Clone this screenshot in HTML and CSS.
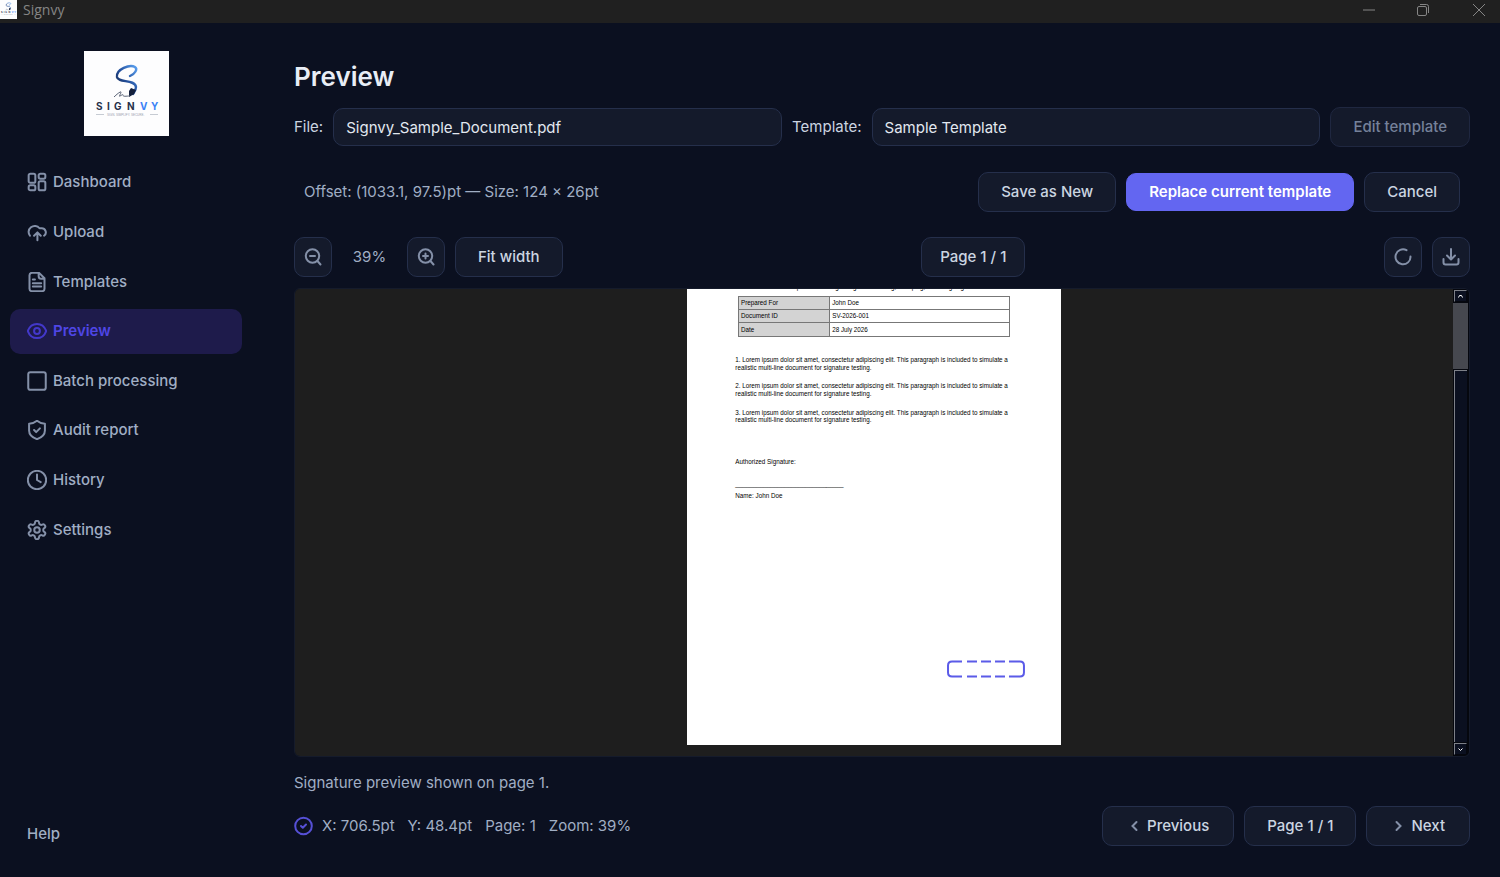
FILE: index.html
```html
<!DOCTYPE html>
<html lang="en">
<head>
<meta charset="utf-8">
<title>Signvy</title>
<link rel="stylesheet" href="styles.css">
</head>
<body>
<svg class="defs" aria-hidden="true">
  <defs>
    <linearGradient id="ink" x1="0" y1="1" x2="1" y2="0">
      <stop offset="0" stop-color="#12203f"/><stop offset=".5" stop-color="#234f9c"/><stop offset="1" stop-color="#5aa0f0"/>
    </linearGradient>
    <symbol id="logo" viewBox="0 0 85 85">
      <rect width="85" height="85" fill="#fdfdfe"/>
      <path d="M46 25C51 23 54 18 51 16C46 13 32 18 33 26C34 32 51 28 52 36C52 39 50 41 49 43" fill="none" stroke="url(#ink)" stroke-width="2.400" stroke-linecap="round"/>
      <path d="M47 37L52 39L50 43L45 46L45 40Z" fill="#14203c"/>
      <path d="M30 46C33 43 37 40 37 41C37 43 34 46 36 45C38 44 39 43 39 44C39 46 42 45 46 45" fill="none" stroke="#5b6477" stroke-width="1"/>
      <text x="12" y="59" class="logo-word" fill="#26304a">S</text>
      <text x="23" y="59" class="logo-word" fill="#26304a">I</text>
      <text x="30" y="59" class="logo-word" fill="#26304a">G</text>
      <text x="43" y="59" class="logo-word" fill="#26304a">N</text>
      <text x="56" y="59" class="logo-word" fill="#3b82f6">V</text>
      <text x="67" y="59" class="logo-word" fill="#3b82f6">Y</text>
      <path d="M12 63.500H20M66 63.500H74" stroke="#aeb4c0" stroke-width=".7"/>
      <text x="23" y="64.500" class="logo-tag">SIGN. SIMPLIFY. SECURE.</text>
    </symbol>
  </defs>
</svg>

<header class="titlebar">
  <svg class="app-icon" viewBox="8 8 70 70"><use href="#logo" width="85" height="85"/></svg>
  <span class="app-name">Signvy</span>
  <div class="window-controls">
    <button type="button" aria-label="Minimize"><svg viewBox="0 0 14 14"><path d="M1 7H13"/></svg></button>
    <button type="button" aria-label="Restore"><svg viewBox="0 0 14 14"><rect x="1.500" y="3.500" width="9" height="9" rx="1.500"/><path d="M4 1.500H10.500A2 2 0 0 1 12.500 3.500V10"/></svg></button>
    <button type="button" aria-label="Close"><svg viewBox="0 0 14 14"><path d="M1 1L13 13M13 1L1 13"/></svg></button>
  </div>
</header>

<div class="app">
  <aside class="sidebar">
    <svg class="brand" viewBox="0 0 85 85" role="img" aria-label="Signvy"><use href="#logo"/></svg>
    <nav class="nav">
      <a href="#"><svg class="icon" viewBox="0 0 24 24"><rect x="2" y="2" width="8" height="11" rx="2"/><rect x="14" y="2" width="8" height="6" rx="2"/><rect x="14" y="11" width="8" height="11" rx="2"/><rect x="2" y="16" width="8" height="6" rx="2"/></svg>Dashboard</a>
      <a href="#"><svg class="icon" viewBox="0 0 24 24"><path d="M3.500 16.500A7 7 0 1 1 15 7.500H17A5 5 0 0 1 20.500 16.500M12.500 22V13M8.500 16.500L12.500 12.500L16.500 16.500"/></svg>Upload</a>
      <a href="#"><svg class="icon" viewBox="0 0 24 24"><path d="M14.500 1H6A3 3 0 0 0 3 4V20A3 3 0 0 0 6 23H18A3 3 0 0 0 21 20V7.500ZM14 1.500V5A3 3 0 0 0 17 8H21M7 9H9.500M7 13.500H17M7 17.500H17"/></svg>Templates</a>
      <a href="#" class="active" aria-current="page"><svg class="icon" viewBox="0 0 24 24"><path d="M1 12C3 6.500 7 3.500 12 3.500S21 6.500 23 12C21 17.500 17 20.500 12 20.500S3 17.500 1 12Z"/><circle cx="12" cy="12" r="3.500"/></svg>Preview</a>
      <a href="#"><svg class="icon" viewBox="0 0 24 24"><rect x="1.500" y="1.500" width="21" height="21" rx="2.500"/></svg>Batch processing</a>
      <a href="#"><svg class="icon" viewBox="0 0 24 24"><path d="M12 1C15 3.500 18 4.500 21.500 4.500V12.500C21.500 18 17.500 21 12 23C6.500 21 2.500 18 2.500 12.500V4.500C6 4.500 9 3.500 12 1ZM8.500 12L11 14.500L15.500 10"/></svg>Audit report</a>
      <a href="#"><svg class="icon" viewBox="0 0 24 24"><circle cx="12" cy="12" r="11"/><path d="M12 5.500V12L16.500 14.500"/></svg>History</a>
      <a href="#"><svg class="icon" viewBox="0 0 24 24"><path d="M12.220 1h-.44a2.200 2.200 0 0 0-2.200 2.200v.2a2.200 2.200 0 0 1-1.100 1.900l-.47.27a2.200 2.200 0 0 1-2.200 0l-.17-.09a2.200 2.200 0 0 0-3 .8l-.24.42a2.200 2.200 0 0 0 .8 3l.17.11a2.200 2.200 0 0 1 1.100 1.890v.56a2.200 2.200 0 0 1-1.100 1.900l-.17.1a2.200 2.200 0 0 0-.8 3l.24.420a2.200 2.200 0 0 0 3 .8l.17-.09a2.200 2.200 0 0 1 2.200 0l.47.27a2.200 2.200 0 0 1 1.100 1.900v.2A2.200 2.200 0 0 0 11.780 23h.44a2.200 2.200 0 0 0 2.200-2.200v-.2a2.200 2.200 0 0 1 1.100-1.900l.47-.27a2.200 2.200 0 0 1 2.200 0l.17.09a2.200 2.200 0 0 0 3-.8l.24-.42a2.200 2.200 0 0 0-.8-3l-.17-.1a2.200 2.200 0 0 1-1.100-1.900v-.56a2.200 2.200 0 0 1 1.100-1.900l.17-.1a2.200 2.200 0 0 0 .8-3l-.24-.42a2.200 2.200 0 0 0-3-.8l-.17.09a2.200 2.200 0 0 1-2.200 0l-.47-.27a2.200 2.200 0 0 1-1.100-1.900v-.2A2.200 2.200 0 0 0 12.220 1z"/><circle cx="12" cy="12" r="3.300"/></svg>Settings</a>
    </nav>
    <a href="#" class="help">Help</a>
  </aside>

  <main class="main">
    <h1>Preview</h1>

    <div class="row fields">
      <label for="file">File:</label>
      <input id="file" type="text" value="Signvy_Sample_Document.pdf" readonly>
      <label for="template">Template:</label>
      <input id="template" type="text" value="Sample Template" readonly>
      <button type="button" class="btn" disabled>Edit template</button>
    </div>

    <div class="row edit-bar">
      <span class="muted grow">Offset: (1033.1, 97.5)pt — Size: 124 × 26pt</span>
      <button type="button" class="btn">Save as New</button>
      <button type="button" class="btn primary">Replace current template</button>
      <button type="button" class="btn">Cancel</button>
    </div>

    <div class="row toolbar">
      <button type="button" class="btn square" aria-label="Zoom out"><svg class="icon small" viewBox="0 0 18 18"><circle cx="8.500" cy="8" r="6.700"/><path d="M13.500 13L16.500 16.500M6 8H11"/></svg></button>
      <span class="zoom-value">39%</span>
      <button type="button" class="btn square" aria-label="Zoom in"><svg class="icon small" viewBox="0 0 18 18"><circle cx="8.500" cy="8" r="6.700"/><path d="M13.500 13L16.500 16.500M6 8H11M8.500 5.500V10.500"/></svg></button>
      <button type="button" class="btn">Fit width</button>
      <button type="button" class="btn counter">Page 1 / 1</button>
      <button type="button" class="btn square" aria-label="Refresh"><svg class="icon small" viewBox="0 0 18 18"><path d="M12.500 2.200A7.500 7.500 0 1 0 16.500 8.500"/></svg></button>
      <button type="button" class="btn square" aria-label="Download"><svg class="icon small" viewBox="0 0 18 18"><path d="M9 1V11M5 7.500L9 11.500L13 7.500M1.500 11V14.500A2 2 0 0 0 3.500 16.500H14.500A2 2 0 0 0 16.500 14.500V11"/></svg></button>
    </div>

    <section class="viewer" aria-label="Document preview">
      <div class="canvas">
        <article class="page">
          <p class="summary">Sample PDF for digital signature testing, stamping, batch signing</p>
          <table>
            <tr><th scope="row">Prepared For</th><td>John Doe</td></tr>
            <tr><th scope="row">Document ID</th><td>SV-2026-001</td></tr>
            <tr><th scope="row">Date</th><td>28 July 2026</td></tr>
          </table>
          <p>1. Lorem ipsum dolor sit amet, consectetur adipiscing elit. This paragraph is included to simulate a<br>realistic multi-line document for signature testing.</p>
          <p>2. Lorem ipsum dolor sit amet, consectetur adipiscing elit. This paragraph is included to simulate a<br>realistic multi-line document for signature testing.</p>
          <p>3. Lorem ipsum dolor sit amet, consectetur adipiscing elit. This paragraph is included to simulate a<br>realistic multi-line document for signature testing.</p>
          <p class="sign-label">Authorized Signature:</p>
          <p class="sign-line">_______________________________</p>
          <p class="sign-name">Name: John Doe</p>
          <svg class="stamp" viewBox="0 0 78 18" aria-label="Signature placement">
            <path d="M15 1.500H5Q1 1.500 1 5.500V12.500Q1 16.500 5 16.500H15M62 1.500H73Q77 1.500 77 5.500V12.500Q77 16.500 73 16.500H62M20 1.500H30M34 1.500H44M48 1.500H58M20 16.500H30M34 16.500H44M48 16.500H58"/>
          </svg>
        </article>
      </div>
      <div class="scrollbar">
        <button type="button" aria-label="Scroll up"><svg viewBox="0 0 7 5"><path d="M1.500 3.500L2.500 1.500H4.500L5.500 3.500"/></svg></button>
        <div class="thumb"></div>
        <div class="track"></div>
        <button type="button" aria-label="Scroll down"><svg viewBox="0 0 7 5"><path d="M1.500 1.500L3.500 3.500L5.500 1.500"/></svg></button>
      </div>
    </section>

    <p class="message muted">Signature preview shown on page 1.</p>

    <footer class="row footer">
      <div class="status muted grow">
        <svg class="icon check" viewBox="0 0 20 20"><circle cx="9.500" cy="10" r="8.300"/><path d="M7 10L8.800 11.700L12 8.500"/></svg>
        <span>X: 706.5pt</span><span>Y: 48.4pt</span><span>Page: 1</span><span>Zoom: 39%</span>
      </div>
      <button type="button" class="btn step"><svg class="chevron" viewBox="0 0 16 16"><path d="M9.500 4L5.500 8L9.500 12"/></svg>Previous</button>
      <button type="button" class="btn">Page 1 / 1</button>
      <button type="button" class="btn step"><svg class="chevron" viewBox="0 0 16 16"><path d="M5.500 4L9.500 8L5.500 12"/></svg>Next</button>
    </footer>
  </main>
</div>
</body>
</html>
```

FILE: styles.css
```css
:root {
  --bg: #0b1020;
  --surface: #141a2b;
  --border: #252f4b;
  --text: #cbd5e1;
  --muted: #a0aec4;
  --icon: #8490a8;
  --accent: #6366f1;
  --page-zoom: 0.629;
}

* { box-sizing: border-box; }

body {
  margin: 0;
  min-height: 100vh;
  display: flex;
  flex-direction: column;
  background: var(--bg);
  color: var(--text);
  font: 15px/20px Inter, "Liberation Sans", sans-serif;
}

button, input { font: inherit; color: inherit; }
h1, p { margin: 0; }
a { color: inherit; text-decoration: none; }
svg { flex: none; }

.defs { position: absolute; width: 0; height: 0; }
.logo-word { font: 700 10px Inter, sans-serif; }
.logo-tag { font: 3px "Liberation Sans", sans-serif; fill: #9aa1af; }

/* Title bar */
.titlebar {
  height: 23px;
  display: flex;
  align-items: flex-start;
  background: #202020;
  color: #858585;
  font: 14px/20px "Open Sans", "Noto Sans", sans-serif;
}
.app-icon { width: 17px; height: 19px; background: #fdfdfe; margin-right: 6px; }
.window-controls { margin-left: auto; display: flex; }
.window-controls button {
  width: 54px;
  height: 19px;
  padding: 0;
  border: 0;
  background: none;
  display: grid;
  place-items: center;
}
.window-controls button:last-child { width: 50px; padding-left: 8px; }
.window-controls svg { width: 14px; height: 14px; fill: none; stroke: #858585; }

.app { flex: 1; display: flex; }

/* Sidebar */
.sidebar {
  width: 252px;
  padding: 28px 10px;
  display: flex;
  flex-direction: column;
}
.brand { width: 85px; height: 85px; align-self: center; }
.nav {
  margin-top: 24px;
  height: 392px;
  display: grid;
  grid-auto-rows: 1fr;
  gap: 5px;
}
.nav a {
  display: flex;
  align-items: center;
  gap: 6px;
  padding: 0 17px;
  border-radius: 10px;
  color: var(--muted);
  font-weight: 500;
}
.nav .active { background: #1e1b4b; color: #4f46e5; font-weight: 600; }
.icon {
  width: 20px;
  height: 20px;
  fill: none;
  stroke: var(--icon);
  stroke-width: 2;
  stroke-linecap: round;
  stroke-linejoin: round;
}
.nav .icon { stroke-width: 2.4; }
.nav .active .icon { stroke: #4338ca; }
.help { margin-top: auto; padding: 0 17px 5px; color: var(--muted); font-weight: 500; }

/* Main column */
.main {
  flex: 1;
  min-width: 0;
  padding: 38px 30px 31px 42px;
  display: flex;
  flex-direction: column;
}
h1 { font-size: 26px; line-height: 32px; font-weight: 600; color: #e8edf5; }
.row { display: flex; align-items: center; gap: 10px; }
.grow { flex: 1; }
.muted { color: var(--muted); }

.fields { margin-top: 14px; }
.fields input {
  flex: 1;
  min-width: 0;
  height: 38px;
  padding: 0 12px;
  border: 1px solid var(--border);
  border-radius: 10px;
  background: var(--surface);
  color: #e2e8f0;
  outline: 0;
}
.edit-bar { margin-top: 25px; padding: 0 10px; }
.toolbar { margin-top: 25px; }

.btn {
  height: 40px;
  padding: 0 22px;
  border: 1px solid var(--border);
  border-radius: 10px;
  background: var(--surface);
  font-weight: 500;
  display: flex;
  align-items: center;
  justify-content: center;
  gap: 4px;
  white-space: nowrap;
}
.btn:disabled { color: #75819a; border-color: #1f2740; }
.btn.primary { height: 38px; background: var(--accent); border-color: var(--accent); color: #fff; font-weight: 600; }
.btn.square { width: 38px; padding: 0; }
.btn.counter { margin: 0 auto; padding: 0 18px; }
.btn.step { padding: 0 24px; }
.icon.small { width: 18px; height: 18px; }
.zoom-value { width: 55px; text-align: center; color: var(--muted); }

/* Document viewer */
.viewer {
  flex: 1 1 0;
  min-height: 0;
  margin-top: 11px;
  display: flex;
  border: 1px solid #151b2b;
  border-radius: 6px;
  overflow: hidden;
}
.canvas {
  flex: 1;
  display: flex;
  flex-direction: column;
  align-items: center;
  justify-content: flex-end;
  padding-bottom: 11px;
  background: #1e1e1e;
  overflow: hidden;
}
.page {
  position: relative;
  flex: none;
  width: 595px;
  height: 842px;
  zoom: var(--page-zoom);
  padding: 108px 77px 0;
  background: #fff;
  color: #000;
  font: 10px/12px "Liberation Sans", Arial, sans-serif;
}
.page p { margin-bottom: 18px; white-space: nowrap; }
.page .summary { margin-bottom: 8px; text-align: center; }
.page table {
  width: 434px;
  margin: 0 auto 31px;
  border-collapse: collapse;
  table-layout: fixed;
  font: inherit;
}
.page th, .page td {
  height: 21px;
  padding: 0 4px;
  border: 1px solid #777;
  font-weight: 400;
  text-align: left;
}
.page th { width: 145px; background: #d3d3d3; }
.page .sign-label { margin-top: 54px; margin-bottom: 24px; }
.page .sign-line { margin-bottom: 6px; }
.stamp {
  position: absolute;
  right: 58px;
  bottom: 107px;
  width: 124px;
  fill: none;
  stroke: #5b5be8;
  stroke-width: 2;
}

.scrollbar { width: 16px; display: flex; flex-direction: column; background: #05070e; }
.scrollbar button {
  height: 12px;
  margin: 1px 2px 1px 1px;
  padding: 0;
  border: 1px solid #05070e;
  border-top-color: #7d8088;
  border-left-color: #7d8088;
  background: var(--bg);
  display: grid;
  place-items: center;
}
.scrollbar svg { width: 7px; height: 5px; fill: none; stroke: #fff; }
.thumb { height: 66px; margin-right: 1px; background: #46484f; }
.track { flex: 1; margin: 1px 2px 0 1px; border-top: 1px solid #7d8088; border-left: 1px solid #7d8088; background: var(--bg); }

.message { margin-top: 16px; }
.footer { margin-top: 13px; }
.status { display: flex; align-items: center; gap: 13px; }
.icon.check { margin-right: -5px; stroke: #5650d6; }
.chevron {
  width: 16px;
  height: 16px;
  fill: none;
  stroke: var(--icon);
  stroke-width: 2;
  stroke-linecap: round;
}
```
